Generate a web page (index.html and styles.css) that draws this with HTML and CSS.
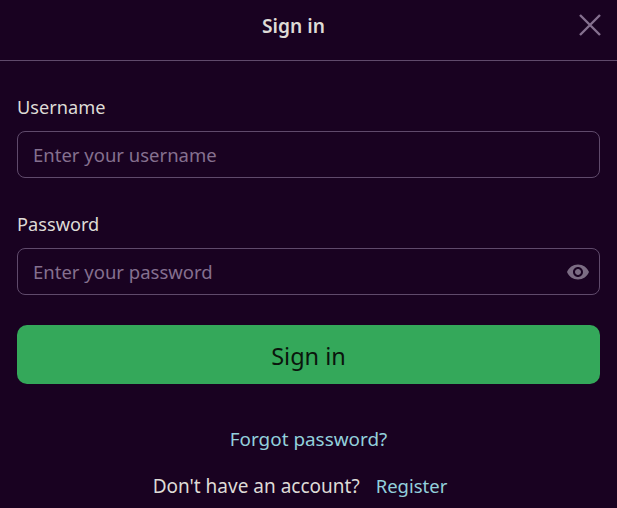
FILE: index.html
```html
<!DOCTYPE html>
<html lang="en">
<head>
    <meta charset="UTF-8">
    <meta name="viewport" content="width=device-width, initial-scale=1.0">
    <title>Sign in</title>
    <link rel="stylesheet" href="styles.css">
</head>
<body>
    <div class="header">
        <div class="header-title">Sign in</div>
        <button class="close-btn" type="button" aria-label="Close">
            <svg width="24" height="24" viewBox="0 0 24 24" fill="none" stroke="currentColor" stroke-width="2.4">
                <path d="M2 2L22 22M22 2L2 22"/>
            </svg>
        </button>
    </div>
    <form class="form">
        <label class="field-label">Username</label>
        <div class="field">
            <input class="field-input" type="text" placeholder="Enter your username">
        </div>
        <label class="field-label">Password</label>
        <div class="field">
            <input class="field-input" type="password" placeholder="Enter your password">
            <svg class="eye-icon" width="24" height="24" viewBox="0 0 24 24" fill="currentColor">
                <path d="M12 4.5C7 4.5 2.73 7.61 1 12c1.73 4.39 6 7.5 11 7.5s9.27-3.11 11-7.5c-1.73-4.39-6-7.5-11-7.5zM12 17c-2.76 0-5-2.24-5-5s2.24-5 5-5 5 2.24 5 5-2.24 5-5 5zm0-8c-1.66 0-3 1.34-3 3s1.34 3 3 3 3-1.34 3-3-1.34-3-3-3z"/>
            </svg>
        </div>
        <button class="submit-btn" type="button">Sign in</button>
    </form>
    <div class="links">
        <a class="link forgot-link" href="#">Forgot password?</a>
        <div class="register-row">
            <span class="register-text">Don't have an account?</span>
            <a class="link register-link" href="#">Register</a>
        </div>
    </div>
</body>
</html>
```

FILE: styles.css
```css
body {
    margin: 0;
    height: 508px;
    overflow: hidden;
    background-color: #190221;
    color: #dedbd6;
    font-family: "Noto Sans", "Open Sans", sans-serif;
    font-size: 18.2px;
}
.header {
    height: 60px;
    padding-right: 30px;
    display: flex;
    justify-content: center;
    align-items: center;
    position: relative;
    border-bottom: 1px solid #5f4a6b;
}
.header-title {
    font-weight: 600;
    font-size: 19.2px;
    margin-top: -9px;
}
.close-btn {
    position: absolute;
    right: 15px;
    top: 13px;
    padding: 0;
    width: 24px;
    height: 24px;
    border: none;
    background: none;
    color: #85708f;
}
.form {
    padding: 33px 17px 0;
    display: flex;
    flex-direction: column;
}
.field-label {
    line-height: 26px;
    margin-bottom: 11px;
}
.field {
    position: relative;
    margin-bottom: 33px;
}
.field:nth-of-type(2) {
    margin-bottom: 30px;
}
.field-input {
    box-sizing: border-box;
    display: block;
    width: 100%;
    height: 47px;
    padding: 0 15px;
    border: 1px solid #5f4a6b;
    border-radius: 8px;
    outline: none;
    background: transparent;
    color: #dedbd6;
    font-family: inherit;
    font-size: 18.5px;
}
.field-input::placeholder {
    color: #85708f;
    opacity: 1;
}
.eye-icon {
    position: absolute;
    right: 10px;
    top: 12px;
    color: #7b6c83;
}
.submit-btn {
    height: 59px;
    padding: 2px 0 0;
    border: none;
    border-radius: 10px;
    background-color: #34a85a;
    color: #0a150c;
    font-family: inherit;
    font-size: 23.5px;
}
.links {
    margin-top: 42px;
    display: flex;
    flex-direction: column;
    align-items: center;
    gap: 21px;
    line-height: 26px;
}
.link {
    color: #92d0dc;
    text-decoration: none;
}
.forgot-link {
    font-size: 18.9px;
}
.register-text {
    font-size: 19px;
}
.register-link {
    font-size: 18.5px;
}
.register-row {
    display: flex;
    gap: 16px;
    margin-right: 17px;
}
```
